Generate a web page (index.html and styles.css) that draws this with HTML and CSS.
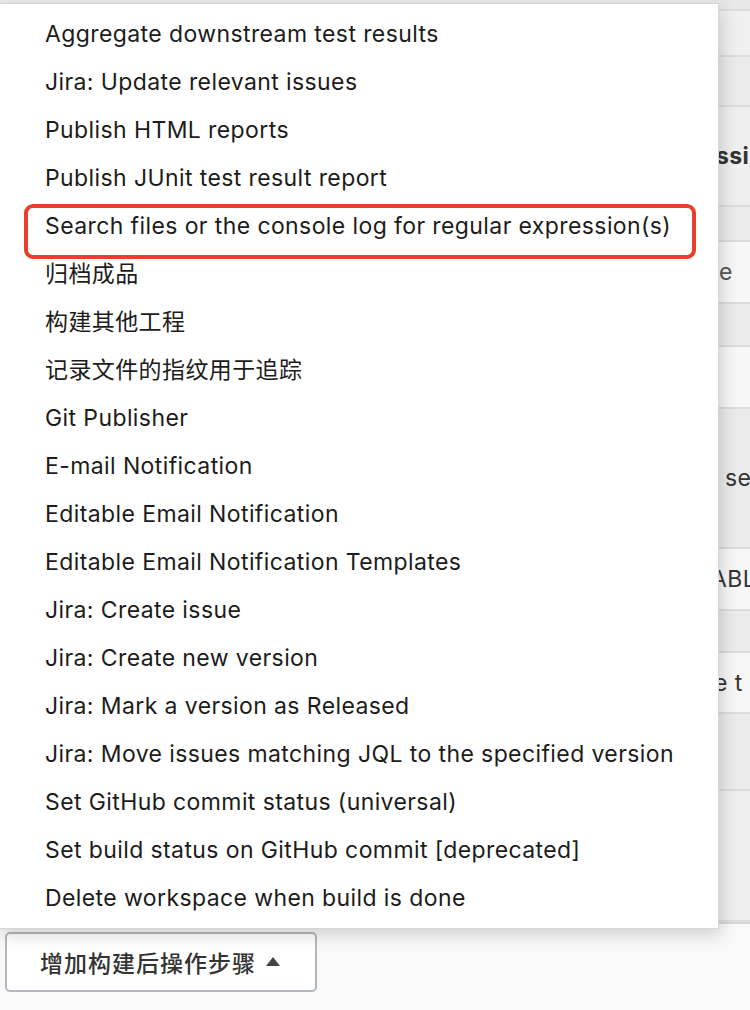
FILE: index.html
```html
<!DOCTYPE html>
<html lang="zh-CN">
<head>
<meta charset="utf-8">
<title>增加构建后操作步骤</title>
<link rel="stylesheet" href="styles.css">
</head>
<body>
<div class="page">
  <div class="form">
    <div class="row r-a"></div>
    <div class="row r-b"></div>
    <div class="row r-c"></div>
    <div class="row r-d"><span class="peek bold">ssi</span></div>
    <div class="row r-e"></div>
    <div class="row r-f field"><span class="peek light">e</span></div>
    <div class="row r-g"></div>
    <div class="row r-h field"></div>
    <div class="row r-i"><span class="peek shift-r">se</span></div>
    <div class="row r-j field"><span class="peek shift-l">ABL</span></div>
    <div class="row r-k"></div>
    <div class="row r-l field"><span class="peek shift-l2">e t</span></div>
    <div class="row r-m"></div>
    <div class="row r-n"></div>
  </div>
  <div class="actions">
    <button class="add-btn" type="button">增加构建后操作步骤 <span class="caret"></span></button>
  </div>

  <ul class="menu">
    <li>Aggregate downstream test results</li>
    <li>Jira: Update relevant issues</li>
    <li>Publish HTML reports</li>
    <li>Publish JUnit test result report</li>
    <li class="marked">Search files or the console log for regular expression(s)</li>
    <li>归档成品</li>
    <li>构建其他工程</li>
    <li>记录文件的指纹用于追踪</li>
    <li>Git Publisher</li>
    <li>E-mail Notification</li>
    <li>Editable Email Notification</li>
    <li>Editable Email Notification Templates</li>
    <li>Jira: Create issue</li>
    <li>Jira: Create new version</li>
    <li>Jira: Mark a version as Released</li>
    <li>Jira: Move issues matching JQL to the specified version</li>
    <li>Set GitHub commit status (universal)</li>
    <li>Set build status on GitHub commit [deprecated]</li>
    <li>Delete workspace when build is done</li>
  </ul>
</div>
</body>
</html>
```
FILE: styles.css
```css
* { box-sizing: border-box; }
html, body { margin: 0; padding: 0; }
body {
  width: 750px;
  height: 1010px;
  overflow: hidden;
  background: #f9f9f9;
  font-family: Inter, "Noto Sans CJK SC", sans-serif;
}
.page {
  position: relative;
  width: 750px;
  height: 1010px;
}
.form {
  display: flex;
  flex-direction: column;
  border-bottom: 2px solid #d9d9d9;
}
.row {
  display: flex;
  align-items: center;
  padding-left: 719px;
  background: #ebebeb;
  border-bottom: 2px solid #dcdcdc;
  white-space: nowrap;
  overflow: hidden;
  font-size: 23px;
  letter-spacing: 0.4px;
  color: #333;
}
.field { background: #f7f7f7; }
.r-a { height: 11px; background: #e8e8e8; }
.r-b { height: 46px; background: #f0f0f0; }
.r-c { height: 50px; }
.r-d { height: 100px; background: #efefef; }
.r-e { height: 35px; }
.r-f { height: 62px; }
.r-g { height: 43px; }
.r-h { height: 62px; }
.r-i { height: 140px; }
.r-j { height: 62px; }
.r-k { height: 42px; }
.r-l { height: 61px; }
.r-m { height: 77px; }
.r-n { height: 131px; background: #efefef; }
.peek { display: block; }
.bold { font-weight: 700; color: #333; margin-left: -3px; }
.light { color: #555; }
.shift-r { margin-left: 6px; }
.shift-l { margin-left: -8px; }
.shift-l2 { margin-left: -5px; }

.actions {
  padding: 8px 0 0 5px;
}
.add-btn {
  display: flex;
  align-items: center;
  gap: 10px;
  height: 60px;
  width: 312px;
  padding: 0 0 0 33px;
  border: 2px solid #b3b8be;
  border-radius: 5px;
  background: #fff;
  color: #333;
  font-family: Inter, "Noto Sans CJK SC", sans-serif;
  font-size: 23px;
  letter-spacing: 1px;
  font-weight: 500;
}
.caret {
  width: 0;
  height: 0;
  border-left: 7.5px solid transparent;
  border-right: 7.5px solid transparent;
  border-bottom: 9px solid #444;
  margin-top: -2px;
}

.menu {
  position: absolute;
  left: -2px;
  top: 3px;
  width: 721px;
  height: 926px;
  margin: 0;
  padding: 6px 0 0 0;
  list-style: none;
  background: #fff;
  border: 1px solid #d6d6d6;
  box-shadow: 3px 6px 16px rgba(0, 0, 0, 0.16);
}
.menu li {
  position: relative;
  height: 48px;
  line-height: 48px;
  padding-left: 46px;
  font-size: 23px;
  letter-spacing: 0.4px;
  color: #1c1c1c;
  white-space: nowrap;
}
.menu li.marked::after {
  content: "";
  position: absolute;
  left: 25px;
  top: 2px;
  width: 664px;
  height: 47px;
  border: 4px solid #e5402b;
  border-radius: 9px;
}
```
